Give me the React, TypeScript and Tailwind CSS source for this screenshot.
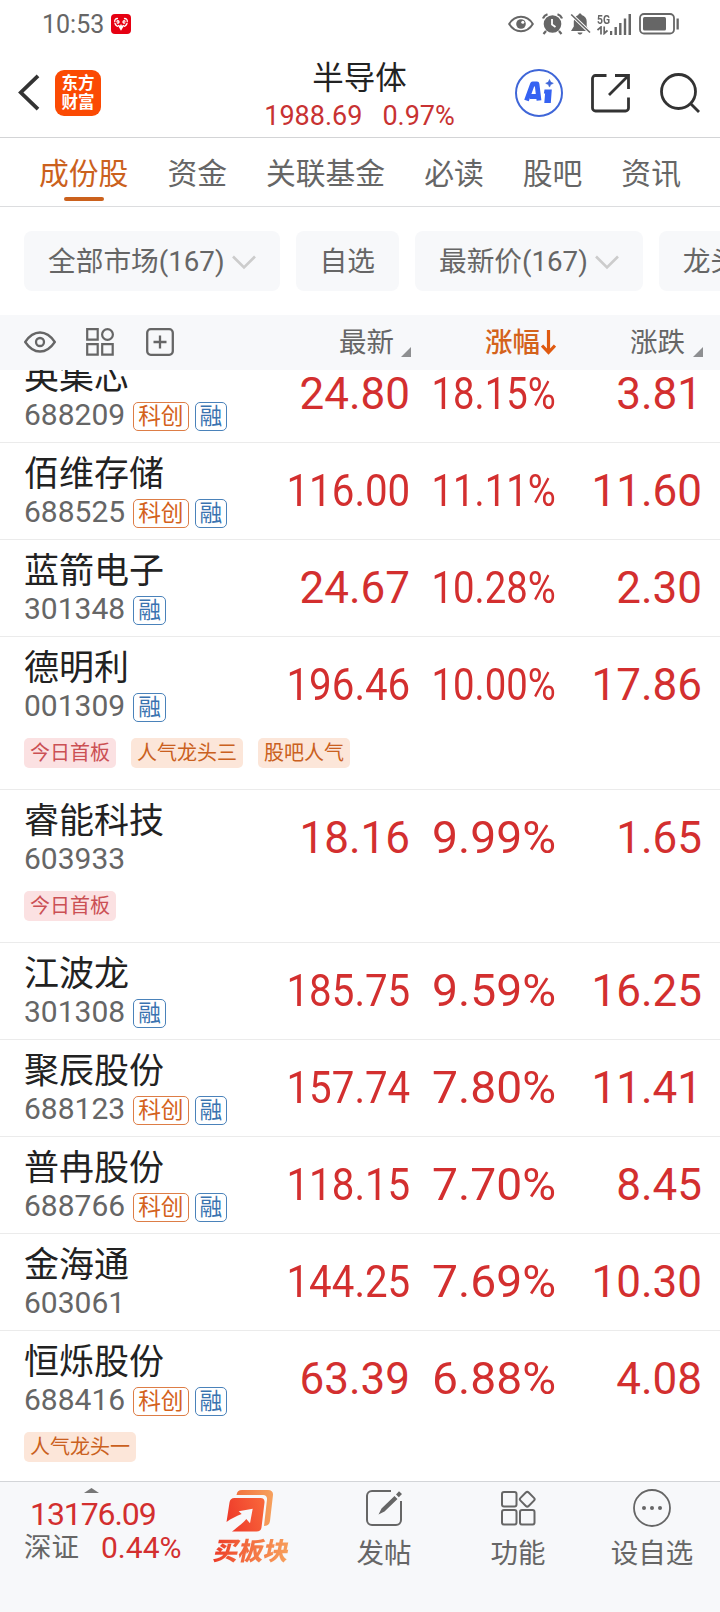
import type { ReactNode } from "react";

interface Stock {
  name: string;
  code: string;
  marks?: string[];
  tags?: string[];
  price: string;
  pct: string;
  change: string;
}

const stocks: Stock[] = [
  { name: "英集芯", code: "688209", marks: ["科创", "融"], price: "24.80", pct: "18.15%", change: "3.81" },
  { name: "佰维存储", code: "688525", marks: ["科创", "融"], price: "116.00", pct: "11.11%", change: "11.60" },
  { name: "蓝箭电子", code: "301348", marks: ["融"], price: "24.67", pct: "10.28%", change: "2.30" },
  { name: "德明利", code: "001309", marks: ["融"], tags: ["今日首板", "人气龙头三", "股吧人气"], price: "196.46", pct: "10.00%", change: "17.86" },
  { name: "睿能科技", code: "603933", tags: ["今日首板"], price: "18.16", pct: "9.99%", change: "1.65" },
  { name: "江波龙", code: "301308", marks: ["融"], price: "185.75", pct: "9.59%", change: "16.25" },
  { name: "聚辰股份", code: "688123", marks: ["科创", "融"], price: "157.74", pct: "7.80%", change: "11.41" },
  { name: "普冉股份", code: "688766", marks: ["科创", "融"], price: "118.15", pct: "7.70%", change: "8.45" },
  { name: "金海通", code: "603061", price: "144.25", pct: "7.69%", change: "10.30" },
  { name: "恒烁股份", code: "688416", marks: ["科创", "融"], tags: ["人气龙头一"], price: "63.39", pct: "6.88%", change: "4.08" },
];

const tabs = ["成份股", "资金", "关联基金", "必读", "股吧", "资讯"];

function StatusBar() {
  return (
    <div className="flex h-12 items-center pl-[42px] pr-[40px] text-[#666]">
      <span className="text-[25px] leading-none">10:53</span>
      <svg className="ml-[7px]" width="20" height="20" viewBox="0 0 20 20">
        <rect width="20" height="20" rx="4" fill="#e60012" />
        <g fill="none" stroke="#fff" strokeWidth="1.3" strokeLinecap="round">
          <path d="M6.500 4.500c-2 0-3 1.500-2.700 3M4 9.500c.3 1.500 1.500 2.300 2.500 2.800M13.500 4.500c2 0 3 1.500 2.700 3M16 9.500c-.3 1.500-1.500 2.300-2.500 2.800" />
          <path d="M6 7.200c1-.9 2-.3 2 .7s-1 1.400-1.800 1M14 7.200c-1-.9-2-.3-2 .7s1 1.400 1.800 1M7.500 11.500l2.500 4 2.500-4M10 11v4M8.800 12v1.500M11.200 12v1.500" />
        </g>
      </svg>
      <svg className="ml-auto" width="26" height="18" viewBox="0 0 26 18" fill="none" stroke="currentColor">
        <path d="M1.200 9C4 4.300 8 1.800 13 1.800S22 4.300 24.800 9C22 13.700 18 16.200 13 16.200S4 13.700 1.200 9z" strokeWidth="2" />
        <circle cx="13" cy="9" r="4.800" fill="currentColor" stroke="none" />
        <circle cx="14.800" cy="7.300" r="1.500" fill="#fff" stroke="none" />
      </svg>
      <svg className="ml-2" width="21" height="22" viewBox="0 0 21 22" fill="currentColor">
        <circle cx="10.500" cy="11" r="8.800" />
        <path d="M1 5.500A7 7 0 0 1 5.500 1.200M20 5.500a7 7 0 0 0-4.500-4.300M4 18l-2.500 3M17 18l2.500 3" fill="none" stroke="currentColor" strokeWidth="2.200" />
        <path d="M10 6v5.500l3.500 2.500" fill="none" stroke="#fff" strokeWidth="1.800" />
      </svg>
      <svg className="ml-[7px]" width="21" height="22" viewBox="0 0 21 22" fill="currentColor">
        <path d="M10 0.500c1 0 1.600.6 1.700 1.500 3.200.8 5 3.400 5 6.500v5l2.800 4.500H1l2.800-4.500v-5c0-3.100 1.800-5.700 4.500-6.500C8.400 1.100 9 .5 10 .5zM7.500 19.500h5c-.4 1.400-1.400 2-2.500 2s-2.100-.6-2.500-2z" />
        <path d="M1.200 1.500 20 19.500" stroke="#fff" strokeWidth="3.400" />
        <path d="M1.200 1.500 20 19.500" stroke="currentColor" strokeWidth="1.600" />
      </svg>
      <div className="ml-[6px] flex h-[22px] items-end gap-[1px]">
        <div className="flex w-[12px] flex-col items-start">
          <span className="origin-left scale-x-[0.8] text-[13px] font-bold leading-[12px]">5G</span>
          <svg width="11" height="9" viewBox="0 0 11 9" fill="none" stroke="currentColor" strokeWidth="1.700">
            <path d="M.5 4 4 1v7.500M7.200.5v7L10.500 4.500" />
          </svg>
        </div>
        <svg width="21" height="21" viewBox="0 0 21 21" fill="currentColor">
          <path d="M0 17h2.200v4H0zM4.500 13h2.400v8H4.500zM9.100 9h2.400v12H9.100zM13.800 4.500h2.400V21h-2.400zM18.500 0H21v21h-2.500z" />
        </svg>
      </div>
      <svg className="ml-2" width="41" height="22" viewBox="0 0 41 22">
        <rect x="1" y="1" width="34" height="19.500" rx="4" fill="none" stroke="currentColor" strokeWidth="1.800" />
        <rect x="4" y="4" width="23" height="13.500" rx="1.500" fill="currentColor" />
        <path d="M37.500 5.500h2.300v11h-2.300z" fill="currentColor" />
      </svg>
    </div>
  );
}

function NavBar() {
  return (
    <div className="flex h-[90px] border-b border-[#d3d4d6]">
      <div className="flex w-[240px] pl-[18px] pt-[22px]">
        <svg className="mt-[4px]" width="22" height="37" viewBox="0 0 22 37" fill="none" stroke="#333" strokeWidth="3.800">
          <path d="M20 1.800 2.800 18.500 20 35.200" />
        </svg>
        <div className="ml-[15px] flex h-[46px] w-[46px] flex-col items-center justify-center rounded-[9px] bg-[#fb4a03] text-[16.5px] font-bold leading-[19px] text-white">
          <span>东方</span>
          <span>财富</span>
        </div>
      </div>
      <div className="flex w-[240px] flex-col items-center pr-px pt-[12px]">
        <h1 className="text-[31.5px] leading-[37px] text-[#222]">半导体</h1>
        <p className="flex gap-[20px] whitespace-nowrap text-[27px] leading-[38px] text-[#c83232]">
          <span>1988.69</span>
          <span>0.97%</span>
        </p>
      </div>
      <div className="flex w-[240px] pl-[35px] pt-[21px]">
        <svg width="48" height="48" viewBox="0 0 48 48">
          <circle cx="24" cy="24" r="23" fill="none" stroke="#3f66d8" strokeWidth="2" />
          <path d="M11.500 31.500 17.500 15h4.500L24 31.500M15 27.500h8" fill="none" stroke="#3562f2" strokeWidth="4.800" strokeLinejoin="round" />
          <path d="M29.500 20.500h7.300L35.800 34H29.300l.8-9.500h-1.200z" fill="#3562f2" />
          <path d="M34.500 10.500l1.200 2.600 2.600 1.200-2.600 1.200-1.200 2.600-1.200-2.600-2.600-1.200 2.600-1.200z" fill="#3f66d8" stroke="#3f66d8" strokeWidth=".6" />
        </svg>
        <svg className="ml-[28px] mt-[5px]" width="39" height="39" viewBox="0 0 39 39" fill="none" stroke="#333" strokeWidth="2.800">
          <path d="M15.500 1.500H4.500a3 3 0 0 0-3 3V34a3 3 0 0 0 3 3H34.500a3 3 0 0 0 3-3V23.500" />
          <path d="M24 1.500H37.500V15M37 2 18 21" />
        </svg>
        <svg className="ml-[30px] mt-[4px]" width="40" height="40" viewBox="0 0 40 40" fill="none" stroke="#333" strokeWidth="2.800">
          <circle cx="18.500" cy="18.500" r="17" />
          <path d="M30.500 30.500 39 39" />
        </svg>
      </div>
    </div>
  );
}

function Tabs() {
  return (
    <nav className="flex h-[69px] gap-[39px] border-b border-[#dcdddf] pl-[39px] text-[29.8px] leading-[71px] text-[#666]">
      {tabs.map((tab, i) => (
        <span key={tab} className={i === 0 ? "relative whitespace-nowrap text-[#cb611d]" : "whitespace-nowrap"}>
          {tab}
          {i === 0 && <i className="absolute left-[25px] top-[59px] h-1 w-10 rounded-full bg-[#cb611d]" />}
        </span>
      ))}
    </nav>
  );
}

function Chip({ children, arrow }: { children: ReactNode; arrow?: boolean }) {
  return (
    <div className="flex h-[60px] shrink-0 items-center rounded-lg bg-[#f7f8fa] px-6 pt-[2px]">
      <span className="whitespace-nowrap">{children}</span>
      {arrow && (
        <svg className="ml-[7px]" width="24" height="15" viewBox="0 0 24 15" fill="none" stroke="#ccc" strokeWidth="2.600">
          <path d="M1 1.500 12 12.500 23 1.500" />
        </svg>
      )}
    </div>
  );
}

function SortMark() {
  return (
    <svg width="10" height="10" viewBox="0 0 10 10" fill="#8e8f91">
      <path d="M10 0v10H0z" />
    </svg>
  );
}

function TableHead() {
  return (
    <div className="flex h-[55px] items-center bg-[#f7f8fa] pl-6 text-[27.5px] leading-[55px] text-[#666]">
      <svg className="-mt-px" width="32" height="22" viewBox="0 0 32 22" fill="none" stroke="currentColor" strokeWidth="2.300">
        <path d="M1.200 11C5.500 4.500 10 1.500 16 1.500S26.500 4.500 30.800 11C26.500 17.500 22 20.500 16 20.500S5.500 17.500 1.200 11z" />
        <circle cx="16" cy="11" r="4" />
      </svg>
      <svg className="ml-[30px] -mt-px" width="28" height="28" viewBox="0 0 28 28" fill="none" stroke="currentColor" strokeWidth="2.200">
        <path d="M1.200 1.200h10.500v10.500H1.200zM1.200 16.200h10.500v10.500H1.200zM16.200 16.200h10.500v10.500H16.200z" />
        <circle cx="21.500" cy="6.500" r="5.400" />
      </svg>
      <svg className="ml-[32px] -mt-px" width="28" height="28" viewBox="0 0 28 28" fill="none" stroke="currentColor" strokeWidth="2.300">
        <rect x="1.200" y="1.200" width="25.600" height="25.600" rx="3.500" />
        <path d="M14 7.500v13M7.500 14h13" />
      </svg>
      <div className="flex w-[237px] items-center justify-end">
        最新
        <span className="ml-[7px] mt-[18px]"><SortMark /></span>
      </div>
      <div className="flex w-[145px] items-center justify-end font-medium text-[#d4621c]">
        涨幅
        <svg className="ml-[1px]" width="15" height="25" viewBox="0 0 15 25" fill="none" stroke="#e05a10" strokeWidth="3.200">
          <path d="M7.500 0v22M1 15.500l6.500 7 6.500-7" />
        </svg>
      </div>
      <div className="flex w-[147px] items-center justify-end">
        涨跌
        <span className="ml-[8px] mt-[18px]"><SortMark /></span>
      </div>
    </div>
  );
}

function Mark({ label }: { label: string }) {
  const color = label === "融" ? "border-[#4a82ba] text-[#3a73b0]" : "border-[#dd7d46] text-[#d4621c]";
  return (
    <span className={`mt-[2px] h-[29px] rounded-[5px] border-[1.5px] px-1 text-[22.7px] leading-[27px] ${color}`}>{label}</span>
  );
}

function StockRow({ stock }: { stock: Stock }) {
  return (
    <div className="border-b border-[#ebebeb]">
      <div className="flex h-24 items-center text-[44px] leading-none text-[#d32f2f]">
        <div className="h-24 w-[250px] pl-6 pt-[13px]">
          <p className="whitespace-nowrap text-[35px] leading-[38px] text-[#222]">{stock.name}</p>
          <div className="mt-[3px] flex h-[30px] items-center gap-[6px]">
            <span className="mr-[2px] text-[30px] leading-[30px] text-[#666]">{stock.code}</span>
            {stock.marks?.map((m) => <Mark key={m} label={m} />)}
          </div>
        </div>
        <div className="-mt-px w-[160px] text-right">
          <span className={stock.price.length > 5 ? "inline-block origin-right scale-x-[0.915]" : ""}>{stock.price}</span>
        </div>
        <div className="-mt-px flex w-[146px] justify-end">
          <span className={stock.pct.length > 5 ? "origin-right scale-x-[0.87]" : "origin-right scale-x-[1.05]"}>{stock.pct}</span>
        </div>
        <div className="-mt-px w-[146px] text-right">{stock.change}</div>
      </div>
      {stock.tags && (
        <div className="flex h-14 gap-[15px] pl-6 pt-[5px] text-[20px] leading-[30px]">
          {stock.tags.map((tag) => (
            <span key={tag} className={`h-[30px] rounded-[5px] px-1.5 ${tag === "今日首板" ? "bg-[#fbe1e2] text-[#cb5054]" : "bg-[#fce6d9] text-[#ca6020]"}`}>
              {tag}
            </span>
          ))}
        </div>
      )}
    </div>
  );
}

function BottomItem({ label, children }: { label: string; children: ReactNode }) {
  return (
    <div className="flex w-[134px] flex-col items-center pt-[7px]">
      <div className="flex h-[38px] items-center">{children}</div>
      <span className="mt-[7px] text-[27.5px] leading-[40px]">{label}</span>
    </div>
  );
}

function BottomBar() {
  return (
    <div className="flex h-[131px] border-t border-[#d3d5d8] bg-[#f7f8fa] text-[#666]">
      <div className="w-[183px] pl-6 pt-[6px]">
        <svg className="ml-[60px]" width="15" height="5" viewBox="0 0 15 5" fill="#777">
          <path d="M7.500 0 15 5H0z" />
        </svg>
        <p className="ml-[6px] mt-[3px] text-[32px] leading-[36px] tracking-[-1.1px] text-[#d32f2f]">13176.09</p>
        <div className="-mt-px flex items-center whitespace-nowrap leading-[34px]">
          <span className="text-[27.5px]">深证</span>
          <span className="ml-[22px] text-[30px] text-[#d32f2f]">0.44%</span>
        </div>
      </div>
      <div className="flex w-[134px] flex-col items-center pt-[8px]">
        <svg width="48" height="42" viewBox="0 0 48 42">
          <defs>
            <linearGradient id="front" x1="0" y1="0.600" x2="1" y2="0.300">
              <stop offset="0" stopColor="#ee3a2a" />
              <stop offset="1" stopColor="#f8653a" />
            </linearGradient>
            <linearGradient id="back" x1="0" y1="0" x2="1" y2="0">
              <stop offset="0" stopColor="#f2743f" />
              <stop offset="1" stopColor="#f6a15e" />
            </linearGradient>
          </defs>
          <path d="M10.500 5C11 1.800 12.500 0 16 0H42c3.500 0 5.300 2 5 5L44 31c-.4 3.300-2.500 5-6 5L41 9.500c.3-3-1.300-4.500-4-4.500z" fill="url(#back)" />
          <path d="M8.500 8H34.500c3 0 4.300 1.700 4 4.500L35.500 37.500c-.3 2.700-2 4-5 4H6C10 38.500 17 33 20.300 29l3.700 4.300L26.700 18.700 12.700 21.300 15.700 24C11 26 5 28.500 .5 32L3.500 12.500C4 9.500 5.500 8 8.500 8z" fill="url(#front)" />
        </svg>
        <span className="ml-[3px] mt-[3px] inline-block -skew-x-12 bg-linear-to-r from-[#ec3a28] to-[#f7a05c] bg-clip-text text-[25px] font-black leading-[34px] text-transparent">买板块</span>
      </div>
      <BottomItem label="发帖">
        <svg width="38" height="38" viewBox="0 0 38 38" fill="none" stroke="currentColor" strokeWidth="2">
          <path d="M26 2H7a5 5 0 0 0-5 5v24a5 5 0 0 0 5 5h24a5 5 0 0 0 5-5V12" />
          <path d="M13.500 25.500l3-6L29.500 7l3 3L19.500 22.500zM31 5.500 34 2.300l3 2.700-3.200 3.200z" fill="currentColor" stroke="none" />
        </svg>
      </BottomItem>
      <BottomItem label="功能">
        <svg width="36" height="36" viewBox="0 0 36 36" fill="none" stroke="currentColor" strokeWidth="2">
          <rect x="2" y="2" width="14.500" height="14.500" rx="2" />
          <rect x="2" y="20" width="14.500" height="14.500" rx="2" />
          <rect x="20" y="20" width="14.500" height="14.500" rx="2" />
          <rect x="21.500" y="3.500" width="11.500" height="11.500" rx="2" transform="rotate(45 27.250 9.250)" />
        </svg>
      </BottomItem>
      <BottomItem label="设自选">
        <svg width="38" height="38" viewBox="0 0 38 38" fill="currentColor">
          <circle cx="19" cy="19" r="18" fill="none" stroke="currentColor" strokeWidth="1.800" />
          <circle cx="11" cy="19" r="2" />
          <circle cx="19" cy="19" r="2" />
          <circle cx="27" cy="19" r="2" />
        </svg>
      </BottomItem>
    </div>
  );
}

export default function App() {
  return (
    <div className="flex h-[1612px] w-[720px] flex-col overflow-hidden bg-white font-[Roboto,'Noto_Sans_CJK_SC',sans-serif]">
      <StatusBar />
      <NavBar />
      <Tabs />
      <div className="flex h-[108px] gap-4 overflow-hidden pl-6 pt-6 text-[27.7px] text-[#666]">
        <Chip arrow>全部市场(167)</Chip>
        <Chip>自选</Chip>
        <Chip arrow>最新价(167)</Chip>
        <Chip>龙头股</Chip>
      </div>
      <TableHead />
      <div className="h-[1111px] overflow-hidden">
        <div className="-mt-6">
          {stocks.map((s) => <StockRow key={s.code} stock={s} />)}
        </div>
      </div>
      <BottomBar />
    </div>
  );
}
